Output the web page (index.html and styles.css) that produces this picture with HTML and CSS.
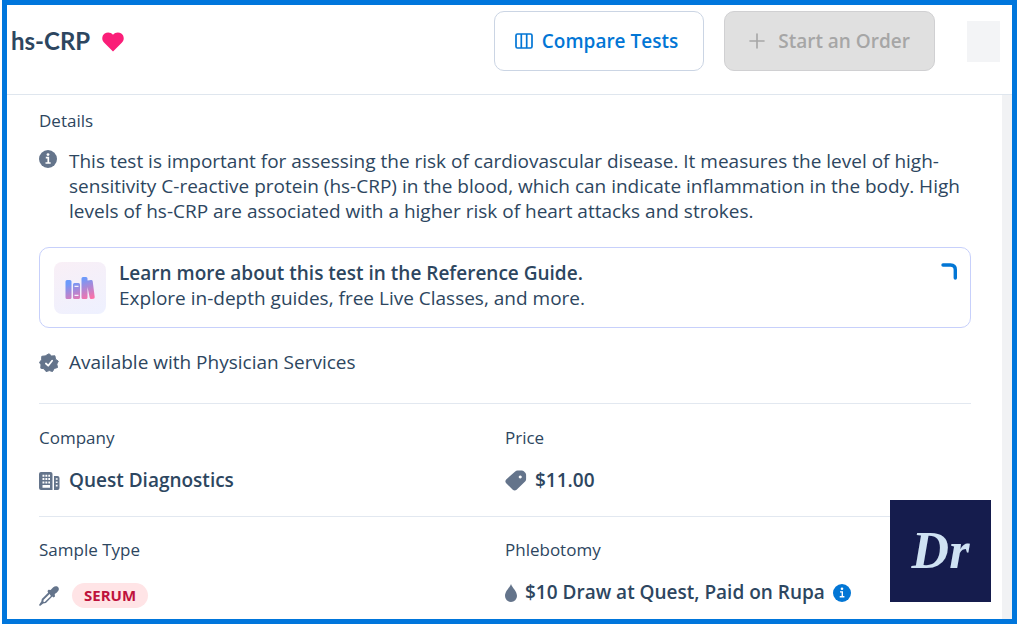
FILE: index.html
```html
<!DOCTYPE html>
<html lang="en">
<head>
<meta charset="utf-8">
<meta name="viewport" content="width=device-width, initial-scale=1">
<title>hs-CRP</title>
<link rel="stylesheet" href="styles.css">
</head>
<body>
<div class="frame">
  <header class="header">
    <h1 class="title">hs-CRP</h1>
    <svg class="heart" width="22" height="20" viewBox="0 0 22 20" aria-hidden="true"><path d="M11 19.500 2 10.600C-.6 7.800-.2 3.500 2.700 1.500 5.300-.3 8.800.1 11 2.700 13.200.1 16.700-.3 19.300 1.500c2.900 2 3.300 6.300.7 9.100z" fill="#fa1e78"/></svg>
    <div class="actions">
      <button class="btn btn-compare" type="button">
        <svg width="18" height="16" viewBox="0 0 18 16" fill="none" stroke="currentColor" stroke-width="1.700" aria-hidden="true"><rect x="1" y="1" width="16" height="14" rx="1.500"/><path d="M6.300 1v14M11.700 1v14"/></svg>
        Compare Tests
      </button>
      <button class="btn btn-order" type="button" disabled>
        <svg width="16" height="16" viewBox="0 0 16 16" fill="none" stroke="currentColor" stroke-width="1.600" stroke-linecap="round" aria-hidden="true"><path d="M8 1v14M1 8h14"/></svg>
        Start an Order
      </button>
      <div class="avatar"></div>
    </div>
  </header>
  <main class="content">
    <h2 class="label">Details</h2>
    <div class="row description">
      <svg class="info-icon" width="18" height="18" viewBox="0 0 18 18" aria-hidden="true"><circle cx="9" cy="9" r="9" fill="#64748b"/><circle cx="9" cy="4.600" r="1.400" fill="#fff"/><path d="M6.800 7.700h2.500v5M6.500 13h5.200" fill="none" stroke="#fff" stroke-width="1.700"/></svg>
      <p class="text">This test is important for assessing the risk of cardiovascular disease. It measures the level of high-sensitivity C-reactive protein (hs-CRP) in the blood, which can indicate inflammation in the body. High levels of hs-CRP are associated with a higher risk of heart attacks and strokes.</p>
    </div>
    <a class="guide" href="#guide">
      <span class="guide-icon">
        <svg width="30" height="24" viewBox="0 0 30 24" aria-hidden="true">
          <defs><linearGradient id="books" gradientUnits="userSpaceOnUse" x1="12" y1="2" x2="20" y2="25"><stop offset=".1" stop-color="#6c9afb"/><stop offset="1" stop-color="#ff70a6"/></linearGradient></defs>
          <path fill="url(#books)" fill-rule="evenodd" d="M2 4h3a1.500 1.500 0 0 1 1.500 1.500v16A1.500 1.500 0 0 1 5 23H2a1.500 1.500 0 0 1-1.500-1.500v-16A1.500 1.500 0 0 1 2 4zM9.500 7h4A1.500 1.500 0 0 1 15 8.500v13a1.500 1.500 0 0 1-1.500 1.500h-4A1.500 1.500 0 0 1 8 21.500v-13A1.500 1.500 0 0 1 9.500 7zM9.500 9.800v1.200h4V9.800zM9.500 18.800V20h4v-1.200zM18 1h3a1.500 1.500 0 0 1 1.500 1.500v2L26 4a1.500 1.500 0 0 1 1.700 1.200l2 15.800a1.500 1.500 0 0 1-1.300 1.700l-2 .3a1.500 1.500 0 0 1-1.700-1.200L22.500 11v10.500A1.500 1.500 0 0 1 21 23h-3a1.500 1.500 0 0 1-1.500-1.500v-19A1.500 1.500 0 0 1 18 1z"/>
        </svg>
      </span>
      <span class="guide-text"><strong>Learn more about this test in the Reference Guide.</strong><span>Explore in-depth guides, free Live Classes, and more.</span></span>
      <svg class="guide-corner" width="16" height="17" viewBox="0 0 16 17" fill="none" aria-hidden="true"><path d="M2 2h7.500q4.800 0 4.800 4.800V15" stroke="#0276d5" stroke-width="3.400" stroke-linecap="round"/></svg>
    </a>
    <div class="row physician">
      <svg width="20" height="20" viewBox="0 0 20 20" aria-hidden="true"><path d="M10 .8 12.600 3l3.300-.2.600 3.400 2.800 2-1.500 2.900.7 3.400-3.300 1-1.700 3-3.200-.9-3.200 1-2-2.800-3.300-.6.200-3.500L.5 9.400l2.100-2.600.2-3.500 3.400-.4z" fill="#64748b" stroke="#64748b" stroke-width="1" stroke-linejoin="round"/><path d="m6.900 10.500 2.300 2.200 3.900-5" fill="none" stroke="#fff" stroke-width="1.800" stroke-linecap="round" stroke-linejoin="round"/></svg>
      <p class="text">Available with Physician Services</p>
    </div>
    <section class="facts">
      <div class="fact">
        <h2 class="label">Company</h2>
        <p class="row value">
          <svg width="21" height="18" viewBox="0 0 21 18" aria-hidden="true"><path fill="#64748b" d="M2 0h9.500a2 2 0 0 1 2 2v16H2a2 2 0 0 1-2-2V2a2 2 0 0 1 2-2zM15 4h3.500a2 2 0 0 1 2 2v10a2 2 0 0 1-2 2H15z"/><path fill="#fff" d="M3.500 2.700h1.900v2H3.500zM6.400 2.700h1.900v2H6.400zM9.300 2.700H11v2H9.300zM3.500 6.100h1.900v2H3.500zM6.400 6.100h1.900v2H6.400zM9.300 6.100H11v2H9.300zM3.500 9.500h1.900v2H3.500zM6.400 9.500h1.900v2H6.400zM9.300 9.500H11v2H9.300zM3.500 13h7.500v2.800H3.500zM16.800 6.200h1.800v1.600h-1.800zM16.800 9.500h1.800v1.600h-1.800zM16.800 12.800h1.800v1.600h-1.800z"/></svg>
          Quest Diagnostics
        </p>
      </div>
      <div class="fact">
        <h2 class="label">Price</h2>
        <p class="row value price">
          <svg width="22" height="21" viewBox="0 0 22 21" aria-hidden="true"><path fill="#64748b" fill-rule="evenodd" d="M12.500.5h4.300q1.200 0 2 .8l1.500 1.500q.8.800.8 2v4.500q0 1.400-1 2.300l-8.500 8.100q-1.900 1.600-3.800 0L1.200 13.200q-1.700-2 0-3.800l9-8q1-.9 2.300-.9zM15.200 5.400a1.500 1.500 0 1 0 .1 0z"/></svg>
          $11.00
        </p>
      </div>
    </section>
    <section class="facts">
      <div class="fact">
        <h2 class="label">Sample Type</h2>
        <p class="row value sample">
          <svg width="20" height="20" viewBox="0 0 20 20" aria-hidden="true"><path fill="#64748b" fill-rule="evenodd" d="M14 1.400c2-1.700 4.300-1.600 5.400.1 1 1.800.2 3.600-1.500 4.900l-2.200 1.700.3 2.300-1.500 1-1.200-.9-6.400 6.400-2.700.5L1 20 0 19l2.300-3.400.5-2.700 6.300-6.200L8.500 5l1-1.200 2.100.2zM10.600 8 4.500 14v2l1.200-.1 6.200-6z"/></svg>
          <span class="pill">SERUM</span>
        </p>
      </div>
      <div class="fact">
        <h2 class="label">Phlebotomy</h2>
        <p class="row value draw">
          <svg width="12" height="18" viewBox="0 0 12 18" aria-hidden="true"><path fill="#64748b" d="M6 0c1.200 3.700 6 7.200 6 12a6 6 0 0 1-12 0C0 7.200 4.800 3.700 6 0z"/></svg>
          $10 Draw at Quest, Paid on Rupa
          <button class="info" type="button" aria-label="Phlebotomy information"><svg width="18" height="18" viewBox="0 0 18 18" aria-hidden="true"><circle cx="9" cy="9" r="9" fill="#0276d5"/><circle cx="9" cy="4.800" r="1.300" fill="#fff"/><path d="M7 7.900h2.300v4.500M6.700 12.800h4.700" fill="none" stroke="#fff" stroke-width="1.400"/></svg></button>
        </p>
      </div>
    </section>
  </main>
  <div class="brand">Dr</div>
</div>
</body>
</html>
```
FILE: styles.css
```css
* { box-sizing: border-box; }
body {
  margin: 0;
  padding: 0 2px 1px;
  background: #fff;
  color: #2d4660;
  font: 19px/25px "Open Sans", "Noto Sans", sans-serif;
}
h1, h2, p { margin: 0; }
svg { display: block; flex: none; }
button { font: inherit; }
.frame {
  position: relative;
  display: flex;
  flex-direction: column;
  min-height: calc(100vh - 1px);
  border: 5px solid #0076dc;
}
.header {
  display: flex;
  align-items: flex-start;
  padding: 6px 12px 23px 4px;
  border-bottom: 1px solid #dfe6ee;
}
.title {
  font: 700 24px/60px Lato, sans-serif;
}
.heart { margin: 21px 0 0 12px; }
.actions {
  display: flex;
  align-items: center;
  gap: 20px;
  margin-left: auto;
}
.btn {
  display: flex;
  align-items: center;
  height: 60px;
  border: 1px solid #cbd5e4;
  border-radius: 10px;
  font-weight: 600;
}
.btn-compare {
  gap: 9px;
  padding: 0 25px 0 20px;
  background: #fff;
  color: #0276d5;
}
.btn-order {
  gap: 13px;
  padding: 0 24px;
  border-color: #d0d0d2;
  background: #e0e0e0;
  color: #a6a6a6;
}
.avatar {
  width: 33px;
  height: 41px;
  margin-left: 12px;
  background: #f3f4f6;
}
.content {
  flex: 1;
  padding: 13px 31px 0 32px;
  border-right: 10px solid #f1f2f4;
}
.label {
  font-size: 17px;
  font-weight: 400;
  line-height: 25px;
}
.row { display: flex; align-items: center; }
.description {
  align-items: flex-start;
  gap: 12px;
  margin-top: 16px;
}
.info-icon { margin-top: 1px; }
.guide {
  display: flex;
  align-items: flex-start;
  gap: 13px;
  margin-top: 23px;
  padding: 14px 13px 13px 14px;
  border: 1px solid #c7d0fb;
  border-radius: 10px;
  color: inherit;
  text-decoration: none;
}
.guide-icon {
  display: grid;
  place-items: center;
  width: 52px;
  height: 52px;
  border-radius: 8px;
  background: linear-gradient(160deg, #f9eff6, #eef1ff);
}
.guide-text { display: grid; flex: 1; margin-top: -1px; }
.guide strong { font-weight: 600; }
.guide-corner { margin-top: 1px; }
.physician {
  gap: 10px;
  padding: 22px 0 28px;
}
.facts {
  display: grid;
  grid-template-columns: 1fr 1fr;
  border-top: 1px solid #e2e8f0;
  padding: 21px 0 23px;
}
.facts:last-child { padding: 20px 0 0; }
.value {
  gap: 9px;
  margin-top: 18px;
  font-weight: 600;
}
.price { gap: 8px; }
.sample { gap: 13px; margin-top: 21px; }
.draw { gap: 8px; }
.pill {
  padding: 0 12px;
  border-radius: 13px;
  background: #ffe4e6;
  color: #be123c;
  font-size: 15px;
  font-weight: 700;
}
.info {
  padding: 0;
  border: 0;
  background: none;
}
.brand {
  position: absolute;
  right: 21px;
  bottom: 17px;
  display: grid;
  place-items: center;
  width: 101px;
  height: 102px;
  background: #151c4d;
  color: #cfe2f3;
  font: italic 700 52px/1 "Liberation Serif", serif;
}
```
